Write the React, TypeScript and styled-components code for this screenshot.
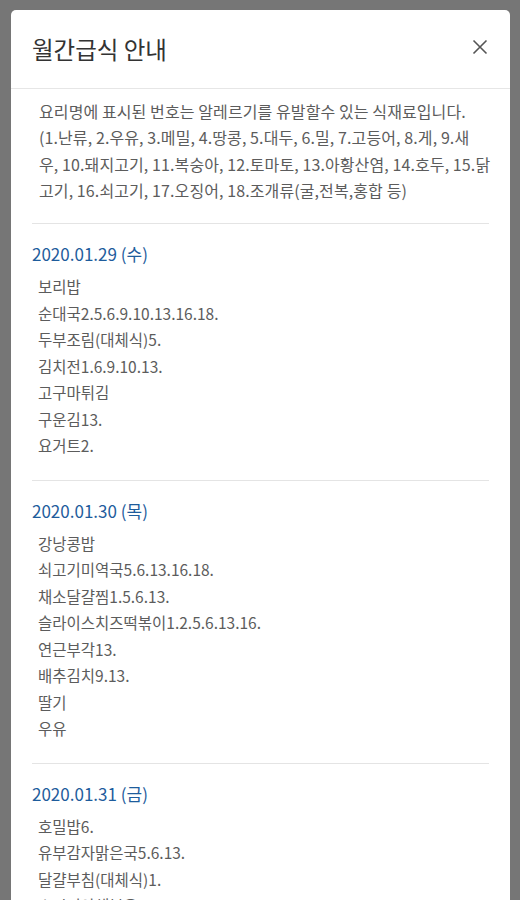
import React from "react";
import styled, { createGlobalStyle } from "styled-components";

const GlobalStyle = createGlobalStyle`
  html, body {
    margin: 0;
    padding: 0;
    background: #767676;
  }
  body {
    font-family: "Noto Sans CJK KR", "Noto Sans", sans-serif;
  }
`;

const Page = styled.div`
  padding: 10px 10px 0 11px;
`;

const Modal = styled.div`
  background: #ffffff;
  border-radius: 5px 5px 0 0;
  overflow: hidden;
`;

const Header = styled.div`
  height: 78px;
  padding: 0 21px;
  display: flex;
  align-items: center;
  justify-content: space-between;
  border-bottom: 1px solid #e6e6e6;
`;

const Title = styled.h2`
  margin: 0;
  font-size: 23.5px;
  font-weight: 400;
  line-height: 32px;
  color: #333333;
`;

const CloseButton = styled.button`
  border: none;
  background: none;
  padding: 0;
  margin-right: 1px;
  margin-bottom: 4px;
  width: 16px;
  height: 16px;
  display: flex;
  cursor: pointer;
`;

const Body = styled.div`
  padding: 0 21px;
`;

// the source breaks these lines mid-word, so keep its line ends
const Notice = styled.p`
  margin: 0 -8px 0 0;
  padding: 9px 0 20px 7px;
  font-size: 16px;
  letter-spacing: 0.1px;
  line-height: 26.3px;
  color: #5c5c5c;
  word-break: break-all;
`;

const DaySection = styled.section`
  border-top: 1px solid #e4e4e4;
  padding: 18px 0 21px;
`;

const DateTitle = styled.h3`
  margin: 0 0 7px;
  font-size: 17px;
  font-weight: 400;
  line-height: 24px;
  color: #1e5c9c;
`;

const MenuList = styled.ul`
  list-style: none;
  margin: 0;
  padding: 0 0 0 6px;
`;

const MenuItem = styled.li`
  font-size: 15.5px;
  line-height: 26.5px;
  color: #5c5c5c;
`;

const noticeLines = [
  "요리명에 표시된 번호는 알레르기를 유발할수 있는 식재료입니다.",
  "(1.난류, 2.우유, 3.메밀, 4.땅콩, 5.대두, 6.밀, 7.고등어, 8.게, 9.새",
  "우, 10.돼지고기, 11.복숭아, 12.토마토, 13.아황산염, 14.호두, 15.닭",
  "고기, 16.쇠고기, 17.오징어, 18.조개류(굴,전복,홍합 등)",
];

const days = [
  {
    date: "2020.01.29 (수)",
    items: [
      "보리밥",
      "순대국2.5.6.9.10.13.16.18.",
      "두부조림(대체식)5.",
      "김치전1.6.9.10.13.",
      "고구마튀김",
      "구운김13.",
      "요거트2.",
    ],
  },
  {
    date: "2020.01.30 (목)",
    items: [
      "강낭콩밥",
      "쇠고기미역국5.6.13.16.18.",
      "채소달걀찜1.5.6.13.",
      "슬라이스치즈떡볶이1.2.5.6.13.16.",
      "연근부각13.",
      "배추김치9.13.",
      "딸기",
      "우유",
    ],
  },
  {
    date: "2020.01.31 (금)",
    items: [
      "호밀밥6.",
      "유부감자맑은국5.6.13.",
      "달걀부침(대체식)1.",
      "소시지야채볶음1.2.5.6.10.13.",
      "배추김치9.13.",
      "귤",
    ],
  },
];

function App() {
  return (
    <>
      <GlobalStyle />
      <Page>
        <Modal>
          <Header>
            <Title>월간급식 안내</Title>
            <CloseButton type="button" aria-label="닫기">
              <svg width="16" height="16" viewBox="0 0 16 16">
                <path
                  d="M1.5 1.5 L14.5 14.5 M14.5 1.5 L1.5 14.5"
                  stroke="#555"
                  strokeWidth="1.6"
                  fill="none"
                />
              </svg>
            </CloseButton>
          </Header>
          <Body>
            <Notice>
              {noticeLines.map((line, i) => (
                <React.Fragment key={i}>
                  {line}
                  {i < noticeLines.length - 1 && <br />}
                </React.Fragment>
              ))}
            </Notice>
            {days.map((day) => (
              <DaySection key={day.date}>
                <DateTitle>{day.date}</DateTitle>
                <MenuList>
                  {day.items.map((item, i) => (
                    <MenuItem key={i}>{item}</MenuItem>
                  ))}
                </MenuList>
              </DaySection>
            ))}
          </Body>
        </Modal>
      </Page>
    </>
  );
}

export default App;
